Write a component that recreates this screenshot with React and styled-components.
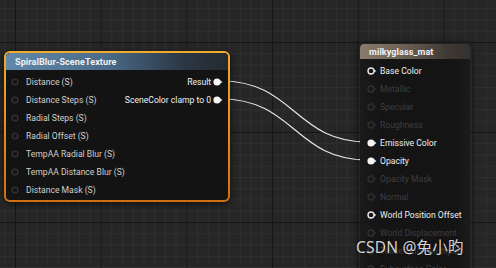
import React from 'react';
import styled, { createGlobalStyle } from 'styled-components';

const GlobalStyle = createGlobalStyle`
  html, body {
    margin: 0;
    padding: 0;
    background: #262626;
    overflow: hidden;
  }
`;

const Canvas = styled.div`
  position: relative;
  width: 496px;
  height: 268px;
  overflow: hidden;
  font-family: Roboto, "Noto Sans", sans-serif;
  background-color: #262626;
  background-image:
    linear-gradient(to right, #161616 1px, transparent 1px),
    linear-gradient(to bottom, #161616 1px, transparent 1px),
    linear-gradient(to right, #2f2f2f 1px, transparent 1px),
    linear-gradient(to bottom, #2f2f2f 1px, transparent 1px);
  background-size: 85.7px 90px, 85.7px 90px, 10.71px 11.25px, 10.71px 11.25px;
  background-position: 15px 42px, 15px 42px, 15px 42px, 15px 42px;
`;

const Wires = styled.svg`
  position: absolute;
  left: 0;
  top: 0;
  pointer-events: none;
`;

const NodeFrame = styled.div`
  position: absolute;
  left: ${({ x }) => x}px;
  top: ${({ y }) => y}px;
  width: ${({ w }) => w}px;
  height: ${({ h }) => h}px;
  box-sizing: border-box;
  border-radius: 6px;
  padding: 2px;
  background: ${({ selected }) =>
    selected ? 'linear-gradient(to bottom, #f0ab2c, #e08a1e 60%, #d26d12)' : 'transparent'};
  box-shadow: 0 2px 6px rgba(0, 0, 0, 0.6);
`;

const NodeBody = styled.div`
  display: flex;
  flex-direction: column;
  height: 100%;
  box-sizing: border-box;
  border-radius: 4px;
  overflow: hidden;
  background: ${({ tint }) => tint || '#131313'};
`;

const Header = styled.div`
  height: ${({ h }) => h}px;
  display: flex;
  align-items: center;
  padding-left: ${({ pad }) => pad}px;
  font-size: 9px;
  font-weight: 700;
  color: #f2f2f2;
  letter-spacing: 0.1px;
  background: ${({ bg }) => bg};
  border-radius: 4px 4px 0 0;
  flex-shrink: 0;
`;

const Columns = styled.div`
  display: flex;
  justify-content: space-between;
  padding-top: ${({ top }) => top}px;
`;

const PinColumn = styled.div`
  display: flex;
  flex-direction: column;
  align-items: ${({ right }) => (right ? 'flex-end' : 'flex-start')};
`;

const PinRow = styled.div`
  height: 18px;
  display: flex;
  align-items: center;
  gap: ${({ gap }) => gap}px;
  flex-direction: ${({ right }) => (right ? 'row-reverse' : 'row')};
  padding: ${({ right, pad }) => (right ? `0 ${pad}px 0 0` : `0 0 0 ${pad}px`)};
  font-size: 8.6px;
  white-space: nowrap;
  color: ${({ state }) =>
    state === 'off' ? '#3e3e3e' : state === 'bright' ? '#f0f0f0' : '#cfcfcf'};
`;

const PinIcon = ({ kind }) => {
  if (kind === 'filled') {
    return (
      <svg width="10" height="8" viewBox="0 0 10 8">
        <circle cx="4" cy="4" r="3.6" fill="#f4f4f4" />
        <path d="M7.2 2.2 L9.4 4 L7.2 5.8 Z" fill="#f4f4f4" />
      </svg>
    );
  }
  if (kind === 'ring') {
    return (
      <svg width="10" height="8" viewBox="0 0 10 8">
        <circle cx="4" cy="4" r="3" fill="none" stroke="#e8e8e8" strokeWidth="1.4" />
        <path d="M7.2 2.4 L9.2 4 L7.2 5.6 Z" fill="#e8e8e8" />
      </svg>
    );
  }
  if (kind === 'dim') {
    return (
      <svg width="10" height="8" viewBox="0 0 10 8">
        <circle cx="4" cy="4" r="3" fill="none" stroke="#303030" strokeWidth="1.4" />
        <path d="M7.2 2.4 L9.2 4 L7.2 5.6 Z" fill="#303030" />
      </svg>
    );
  }
  return (
    <svg width="9" height="8" viewBox="0 0 9 8">
      <circle cx="4" cy="4" r="3" fill="#161616" stroke="#3a3a3a" strokeWidth="1.2" />
    </svg>
  );
};

const Watermark = styled.div`
  position: absolute;
  left: 356px;
  top: 235px;
  font-family: "Noto Sans", "Noto Sans CJK SC", sans-serif;
  font-size: 15.5px;
  color: rgba(240, 240, 240, 0.88);
  text-shadow: 0 0 2px rgba(0, 0, 0, 0.5);
  letter-spacing: 0.2px;
`;

const spiralInputs = [
  'Distance (S)',
  'Distance Steps (S)',
  'Radial Steps (S)',
  'Radial Offset (S)',
  'TempAA Radial Blur (S)',
  'TempAA Distance Blur (S)',
  'Distance Mask (S)',
];

const spiralOutputs = ['Result', 'SceneColor clamp to 0'];

const materialInputs = [
  { name: 'Base Color', pin: 'ring', state: 'bright' },
  { name: 'Metallic', pin: 'dim', state: 'off' },
  { name: 'Specular', pin: 'dim', state: 'off' },
  { name: 'Roughness', pin: 'dim', state: 'off' },
  { name: 'Emissive Color', pin: 'filled', state: 'bright' },
  { name: 'Opacity', pin: 'filled', state: 'bright' },
  { name: 'Opacity Mask', pin: 'dim', state: 'off' },
  { name: 'Normal', pin: 'dim', state: 'off' },
  { name: 'World Position Offset', pin: 'ring', state: 'bright' },
  { name: 'World Displacement', pin: 'dim', state: 'off' },
  { name: 'Tessellation Multiplier', pin: 'dim', state: 'off' },
  { name: 'Subsurface Color', pin: 'dim', state: 'off' },
];

const wire = (x1, y1, x2, y2) => {
  const d = (x2 - x1) * 0.5;
  return `M${x1} ${y1} C${x1 + d} ${y1} ${x2 - d} ${y2} ${x2} ${y2}`;
};

export default function App() {
  return (
    <>
      <GlobalStyle />
      <Canvas>
        <Wires width="496" height="268">
          <path d={wire(221, 81, 368, 142)} stroke="#e6e6e6" strokeWidth="1.2" fill="none" />
          <path d={wire(221, 99, 368, 160)} stroke="#e6e6e6" strokeWidth="1.2" fill="none" />
        </Wires>

        <NodeFrame x={4} y={51} w={226} h={151} selected>
          <NodeBody>
            <Header h={17} pad={9} bg="linear-gradient(to right, #6189ab, #4b6b88 45%, #2b3744 80%, #242a30)">
              SpiralBlur-SceneTexture
            </Header>
            <Columns top={3}>
              <PinColumn>
                {spiralInputs.map((name) => (
                  <PinRow key={name} gap={6} pad={5}>
                    <PinIcon kind="empty" />
                    {name}
                  </PinRow>
                ))}
              </PinColumn>
              <PinColumn right>
                {spiralOutputs.map((name) => (
                  <PinRow key={name} right gap={2} pad={6} state="bright">
                    <PinIcon kind="filled" />
                    {name}
                  </PinRow>
                ))}
              </PinColumn>
            </Columns>
          </NodeBody>
        </NodeFrame>

        <NodeFrame x={358} y={42} w={114} h={240}>
          <NodeBody tint="linear-gradient(to right, #1a1a1a, #141414 20%, #141414 85%, #1b1b1b)">
            <Header h={15} pad={9} bg="linear-gradient(to right, #8a7b6b, #6c6054 40%, #3e3833 80%, #353230)">
              milkyglass_mat
            </Header>
            <Columns top={3}>
              <PinColumn>
                {materialInputs.map((p) => (
                  <PinRow key={p.name} gap={3} pad={7} state={p.state}>
                    <PinIcon kind={p.pin} />
                    {p.name}
                  </PinRow>
                ))}
              </PinColumn>
            </Columns>
          </NodeBody>
        </NodeFrame>

        <Watermark>CSDN @兔小昀</Watermark>
      </Canvas>
    </>
  );
}
